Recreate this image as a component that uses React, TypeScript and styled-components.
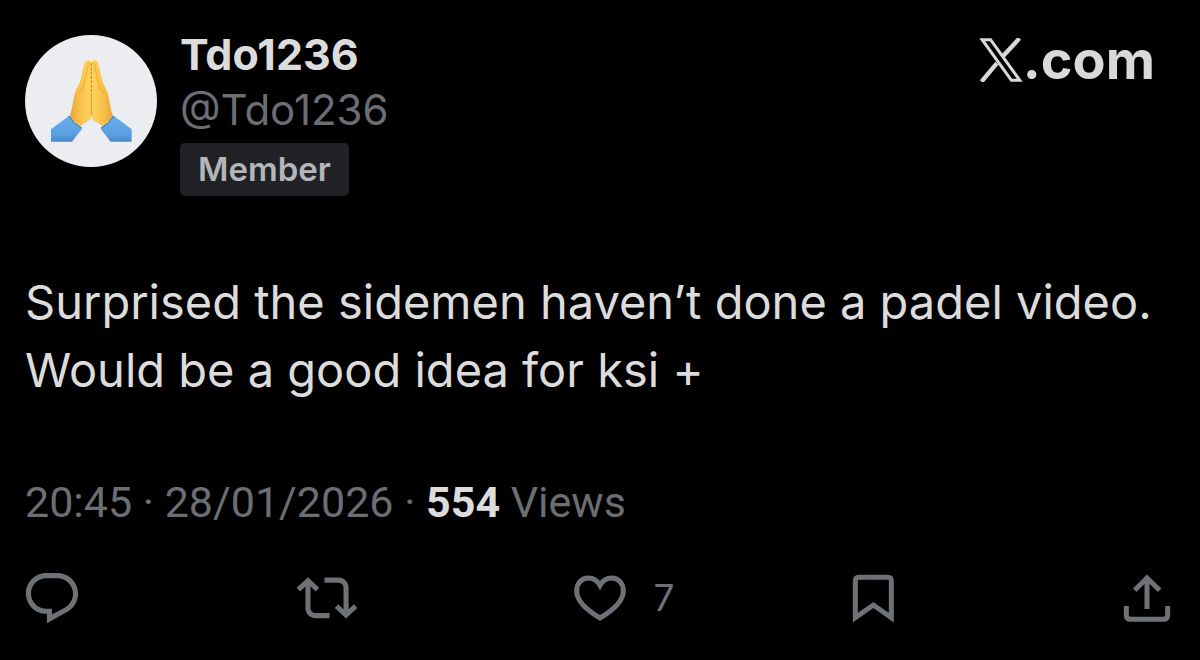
import React from "react";
import styled, { createGlobalStyle } from "styled-components";

const GlobalStyle = createGlobalStyle`
  * { box-sizing: border-box; }
  body {
    margin: 0;
    background: #000;
    font-family: Inter, "Liberation Sans", sans-serif;
    color: #dcdcdc;
  }
`;

const Post = styled.article`
  padding: 27px 29px 36px 25px;
`;

const Header = styled.header`
  display: flex;
  align-items: flex-start;
`;

const Avatar = styled.svg`
  flex: none;
  width: 132px;
  height: 132px;
  margin-top: 8px;
  border-radius: 50%;
  background: #ecedf1;
`;

const Identity = styled.div`
  display: flex;
  flex-direction: column;
  align-items: flex-start;
  margin-left: 23px;
`;

const Name = styled.h1`
  margin: 0;
  font-size: 43px;
  line-height: 55px;
  font-weight: 700;
`;

const Handle = styled.a`
  font-size: 42px;
  line-height: 56px;
  color: #6b6e73;
  text-decoration: none;
`;

const Badge = styled.span`
  margin-top: 5px;
  padding: 0 18px;
  border-radius: 5px;
  background: #202226;
  color: #b4b6ba;
  font-size: 33px;
  line-height: 53px;
  font-weight: 600;
`;

const Site = styled.a`
  display: flex;
  align-items: center;
  margin: 5px 16px 0 auto;
  color: #d9d9d9;
  font-size: 54px;
  line-height: 56px;
  font-weight: 700;
  text-decoration: none;
`;

const SiteMark = styled.svg`
  width: 44px;
  height: 44px;
`;

const Body = styled.p`
  margin: 72px 0 0;
  font-size: 47px;
  line-height: 68px;
`;

const Meta = styled.p`
  margin: 70px 0 0;
  font-family: Roboto, "Liberation Sans", sans-serif;
  font-size: 43px;
  line-height: 56px;
  color: #6b6e73;
`;

const Views = styled.strong`
  color: #dcdcdc;
  font-weight: 700;
`;

const Actions = styled.div`
  display: grid;
  grid-template-columns: 271fr 277fr 278fr 271fr auto;
  align-items: center;
  justify-items: start;
  height: 52px;
  margin-top: 42px;
`;

const Action = styled.button`
  display: flex;
  align-items: center;
  gap: 26px;
  padding: 0;
  border: 0;
  background: none;
  color: #6e7176;
  font: inherit;
  font-size: 37px;
  line-height: 52px;
`;

const Icon = styled.svg<{ $solid?: boolean }>`
  flex: none;
  fill: ${(p) => (p.$solid ? "currentColor" : "none")};
  stroke: ${(p) => (p.$solid ? "none" : "currentColor")};
  stroke-width: 15;
`;

export default function App() {
  return (
    <>
      <GlobalStyle />
      <Post>
        <Header>
          <Avatar viewBox="45 42 396 396" role="img" aria-label="Folded hands">
            <defs>
              <linearGradient id="skin" x1="0" y1="0" x2="1" y2="0">
                <stop offset="0" stopColor="#e9a03c" />
                <stop offset="0.45" stopColor="#f8c04a" />
                <stop offset="1" stopColor="#ffd45c" />
              </linearGradient>
              <linearGradient id="sleeve" x1="0" y1="0" x2="0" y2="1">
                <stop offset="0" stopColor="#6aaeea" />
                <stop offset="0.7" stopColor="#5ba1e2" />
                <stop offset="1" stopColor="#4789cc" />
              </linearGradient>
              <g id="hand">
                <path fill="url(#skin)" d="M244 123C238 115 228 117 224 126C218 144 216 163 211 180C207 192 198 204 194 220C189 240 187 266 178 288L208 318Q222 307 234 301Q244 295 244 281Z" />
                <path fill="url(#sleeve)" d="M177 284L123 325V362H186L215 325V320Q190 308 177 284Z" />
                <path fill="none" stroke="#376a9d" strokeWidth="3" d="M177 285Q190 309 215 321" />
                <path fill="none" stroke="#e79a31" strokeWidth="2" d="M224 176Q222 202 207 218M236 124Q230 150 226 176" />
              </g>
            </defs>
            <use href="#hand" />
            <use href="#hand" transform="matrix(-1 0 0 1 488 0)" />
            <path fill="none" stroke="#b97825" strokeWidth="3" strokeDasharray="9 4" d="M244 126V220" />
            <path fill="none" stroke="#b97825" strokeWidth="2" d="M244 220V284" />
          </Avatar>
          <Identity>
            <Name>Tdo1236</Name>
            <Handle href="#profile">@Tdo1236</Handle>
            <Badge>Member</Badge>
          </Identity>
          <Site href="#home">
            <SiteMark viewBox="60 53 130 131" aria-label="X">
              <g fill="none" stroke="currentColor">
                <path strokeWidth="9" d="M69 58H94L181 179H156Z" />
                <path strokeWidth="13" d="M180 54L132 106M113 128L67 183" />
              </g>
            </SiteMark>
            .com
          </Site>
        </Header>

        <Body>
          Surprised the sidemen haven’t done a padel video. Would be a good idea for ksi +
        </Body>
        <Meta>
          <time>20:45 · 28/01/2026</time> · <Views>554</Views> Views
        </Meta>

        <Actions>
          <Action aria-label="Reply">
            <Icon $solid width="54" height="52" viewBox="1.4 1.6 21.2 20.4">
              <path d="M1.751 10c0-4.42 3.584-8 8.005-8h4.366c4.49 0 8.129 3.64 8.129 8.13 0 2.96-1.607 5.68-4.196 7.11l-8.054 4.46v-3.69h-.067c-4.49.1-8.183-3.51-8.183-8.01zm8.005-6c-3.317 0-6.005 2.69-6.005 6 0 3.37 2.77 6.08 6.138 6.01l.351-.01h1.761v2.3l5.087-2.81c1.951-1.08 3.163-3.13 3.163-5.36 0-3.39-2.744-6.13-6.129-6.13H9.756z" />
            </Icon>
          </Action>
          <Action aria-label="Repost">
            <Icon $solid width="62" height="46" viewBox="-0.2 3 24.4 18.1">
              <path d="M4.5 3.88l4.432 4.14-1.364 1.46L5.5 7.55V16c0 1.1.896 2 2 2H13v2H7.5c-2.209 0-4-1.79-4-4V7.55L1.432 9.48.068 8.02 4.5 3.88zM16.5 6H11V4h5.5c2.209 0 4 1.79 4 4v8.45l2.068-1.93 1.364 1.46-4.432 4.14-4.432-4.14 1.364-1.46 2.068 1.93V8c0-1.1-.896-2-2-2z" />
            </Icon>
          </Action>
          <Action aria-label="Like, 7">
            <Icon width="54" height="48" viewBox="39 45 162 144">
              <path d="M120 79C111 63 98 57 86 57C64 57 50 73 50 96C50 130 88 158 120 177C152 158 190 130 190 96C190 73 176 57 154 57C142 57 129 63 120 79Z" />
            </Icon>
            7
          </Action>
          <Action aria-label="Bookmark">
            <Icon width="43" height="49" viewBox="36 45 129 147">
              <path d="M46 176V66Q46 55 57 55H143Q154 55 154 66V176L100 138Z" />
            </Icon>
          </Action>
          <Action aria-label="Share">
            <Icon width="48" height="49" viewBox="39 42 144 147">
              <path d="M111 147V54M74 91L111 54L149 91M49 138V165Q49 178 62 178H160Q173 178 173 165V138" />
            </Icon>
          </Action>
        </Actions>
      </Post>
    </>
  );
}
